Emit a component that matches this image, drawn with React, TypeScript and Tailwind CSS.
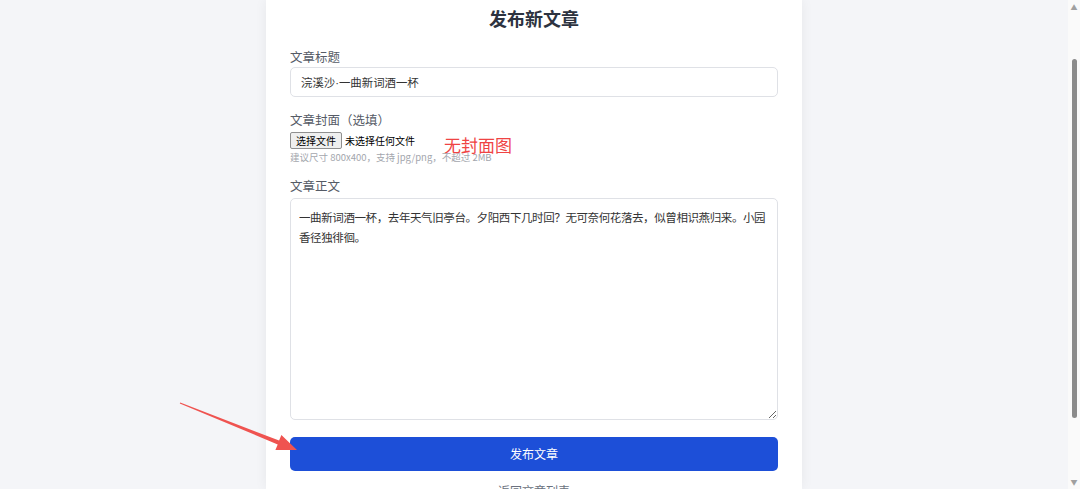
import React from "react";

const cjk = { fontFamily: '"Noto Sans CJK SC", "Noto Sans", sans-serif' };
// latin glyphs (the middle dot) from Liberation, the rest from Noto CJK
const mixed = { fontFamily: '"Liberation Sans", "Noto Sans CJK SC", sans-serif' };

// fake window scrollbar on the right edge
function ScrollBar() {
  return (
    <div className="w-[12px] h-full bg-[#fafafa] flex flex-col items-center">
      <div className="h-[14px] flex items-center justify-center text-[7px] leading-none text-[#a0a0a0]">▲</div>
      <div className="flex-1 w-full flex flex-col px-[3px] pt-[45px] pb-[57px]">
        <div className="flex-1 rounded-full bg-[#8b8b8b] ml-[1px]" />
      </div>
      <div className="h-[14px] flex items-center justify-center text-[7px] leading-none text-[#a0a0a0]">▼</div>
    </div>
  );
}

function Arrow() {
  return (
    <svg className="absolute inset-0 pointer-events-none" width="1080" height="489">
      <polygon
        points="179.8,403.5 277.7,444.4 275.4,449.9 297,450 281.4,435.1 279.1,440.6 180.2,402.5"
        fill="#ef5350"
      />
    </svg>
  );
}

export default function App() {
  return (
    <div className="relative w-[1080px] h-[489px] overflow-hidden flex bg-[#f4f5f8]" style={cjk}>
      <main className="flex-1 h-full flex justify-center">
        <div className="w-[536px] h-full bg-white shadow-[0_0_12px_rgba(0,0,0,0.06)] px-6 pt-[4px]">
          <h1 className="text-center text-[18px] leading-7 font-bold text-[#2d3340]">发布新文章</h1>

          <div className="mt-[15px]">
            <label className="block text-[12.5px] leading-5 text-[#555b66]">文章标题</label>
            <input
              defaultValue="浣溪沙·一曲新词酒一杯"
              className="block w-full h-[30px] px-2.5 text-[11.4px] text-[#333] border border-[#dfe1e6] rounded-[5px] outline-none"
              style={mixed}
            />
          </div>

          <div className="mt-[13px]">
            <label className="block text-[12.5px] leading-5 text-[#555b66]">文章封面（选填）</label>
            <div className="flex items-start h-[18px] mt-[2px]">
              <button className="h-[17px] px-[5px] text-[10px] leading-none text-black bg-[#efefef] border border-[#8f8f8f] rounded-[2px]" style={cjk}>
                选择文件
              </button>
              <span className="ml-[3px] text-[10px] leading-[17px] text-black">未选择任何文件</span>
              <span className="ml-[29px] mt-[4px] text-[17px] leading-none text-[#ef4444]">无封面图</span>
            </div>
            <p className="text-[9.5px] leading-[14px] text-[#a3a6ad]">建议尺寸 800x400，支持 jpg/png，不超过 2MB</p>
          </div>

          <div className="mt-[12px]">
            <label className="block text-[12.5px] leading-5 text-[#555b66]">文章正文</label>
            <textarea
              readOnly
              defaultValue="一曲新词酒一杯，去年天气旧亭台。夕阳西下几时回？无可奈何花落去，似曾相识燕归来。小园香径独徘徊。"
              className="block w-full h-[222px] mt-[2px] px-2 py-2 text-[11.5px] tracking-[-0.4px] leading-5 text-[#333] border border-[#dfe1e6] rounded-[5px] outline-none"
              style={cjk}
            />
          </div>

          <button className="block w-full h-[34px] mt-[17px] rounded-[5px] bg-[#1d4fd8] text-white text-[12px]" style={cjk}>
            发布文章
          </button>
          <p className="mt-[10px] text-center text-[12px] leading-5 text-[#6b7280]">返回文章列表</p>
        </div>
      </main>
      <ScrollBar />
      <Arrow />
    </div>
  );
}
